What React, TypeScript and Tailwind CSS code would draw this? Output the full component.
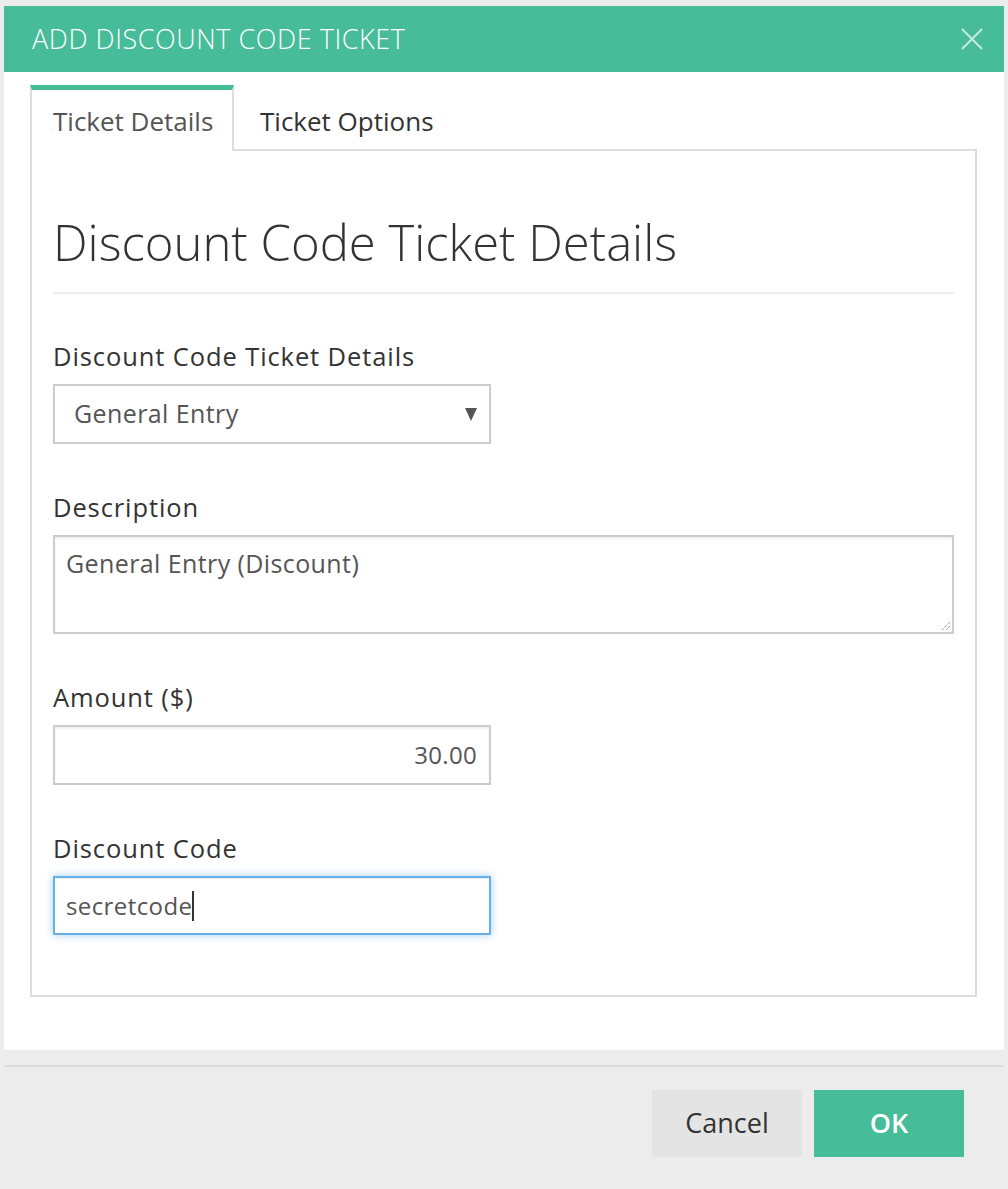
import React from 'react';

const font = "font-['Open_Sans',_'Liberation_Sans',_sans-serif]";

const Label: React.FC<{ children: React.ReactNode }> = ({ children }) => (
  <div className="text-[25.5px] leading-[34px] text-[#333] tracking-[0.9px] mb-[11px]">{children}</div>
);

const App: React.FC = () => {
  return (
    <div className={`${font} min-h-[1189px] bg-[#ececec] pt-[6px] px-[4px]`}>
      {/* Header */}
      <div className="h-[66px] bg-[#46bc99] flex items-center justify-between pl-[28px] pr-[21px]">
        <h2 className="text-white text-[27px] font-light tracking-[0.55px]">ADD DISCOUNT CODE TICKET</h2>
        <svg width="22" height="22" viewBox="0 0 22 22" className="opacity-70">
          <path d="M1 1 L21 21 M21 1 L1 21" stroke="white" strokeWidth="2" />
        </svg>
      </div>

      {/* Body */}
      <div className="bg-white px-[26px] pt-[13px] pb-[53px]">
        {/* Tabs */}
        <div className="flex border-b-2 border-[#ddd] mr-[1px]">
          <div className="w-[204px] h-[66px] -mb-[2px] bg-white border-t-[5px] border-t-[#46bc99] border-x-2 border-x-[#ddd] pl-[21px] pt-[12px] text-[26px] text-[#555]">
            Ticket Details
          </div>
          <div className="pl-[26px] pt-[17px] text-[26px] text-[#333]">Ticket Options</div>
        </div>

        {/* Panel */}
        <div className="mr-[1px] border-2 border-t-0 border-[#ddd] px-[21px] pt-[65px] pb-[60px]">
          <h1 className="text-[49px] leading-[53px] font-light text-[#333]">Discount Code Ticket Details</h1>
          <div className="mt-[23px] h-[2px] bg-[#eee]" />

          <div className="mt-[45px]">
            <Label>Discount Code Ticket Details</Label>
            <div className="w-[438px] h-[60px] border-2 border-[#ccc] flex items-center justify-between pl-[19px] pr-[12px] text-[25px] tracking-[0.4px] text-[#555]">
              <span>General Entry</span>
              <svg width="12" height="13" viewBox="0 0 12 13">
                <path d="M0 0 L12 0 L6 13 Z" fill="#555" />
              </svg>
            </div>
          </div>

          <div className="mt-[46px]">
            <Label>Description</Label>
            <div className="relative h-[99px] border-2 border-[#ccc] shadow-[inset_0_2px_2px_rgba(0,0,0,0.06)] pl-[11px] pt-[9px] text-[25px] tracking-[0.4px] leading-[34px] text-[#555]">
              General Entry (Discount)
              <svg width="12" height="12" viewBox="0 0 12 12" className="absolute right-[1px] bottom-[1px]">
                <path d="M11 3 L3 11 M11 7 L7 11" stroke="#666" strokeWidth="1" strokeDasharray="1 1" />
              </svg>
            </div>
          </div>

          <div className="mt-[46px]">
            <Label>Amount ($)</Label>
            <div className="w-[438px] h-[60px] border-2 border-[#ccc] shadow-[inset_0_2px_2px_rgba(0,0,0,0.06)] flex items-center justify-end pr-[12px] text-[24px] tracking-[0.3px] text-[#555]">
              30.00
            </div>
          </div>

          <div className="mt-[46px]">
            <Label>Discount Code</Label>
            <div className="w-[438px] h-[59px] border-2 border-[#66afe9] shadow-[inset_0_1px_1px_rgba(0,0,0,0.075),0_0_8px_rgba(102,175,233,0.6)] flex items-center pl-[11px] text-[24px] tracking-[0.4px] text-[#555]">
              <span>secretcode</span>
              <span className="w-[2px] h-[30px] bg-[#333]" />
            </div>
          </div>
        </div>
      </div>

      {/* Footer */}
      <div className="mt-[15px] border-t-2 border-[#dcdcdc] pt-[23px] pr-[40px] flex justify-end gap-[12px]">
        <button className="w-[150px] h-[67px] bg-[#e4e4e4] text-[#333] text-[27px]">Cancel</button>
        <button className="w-[150px] h-[67px] bg-[#46bc99] text-white text-[27px] font-semibold">OK</button>
      </div>
    </div>
  );
};

export default App;
